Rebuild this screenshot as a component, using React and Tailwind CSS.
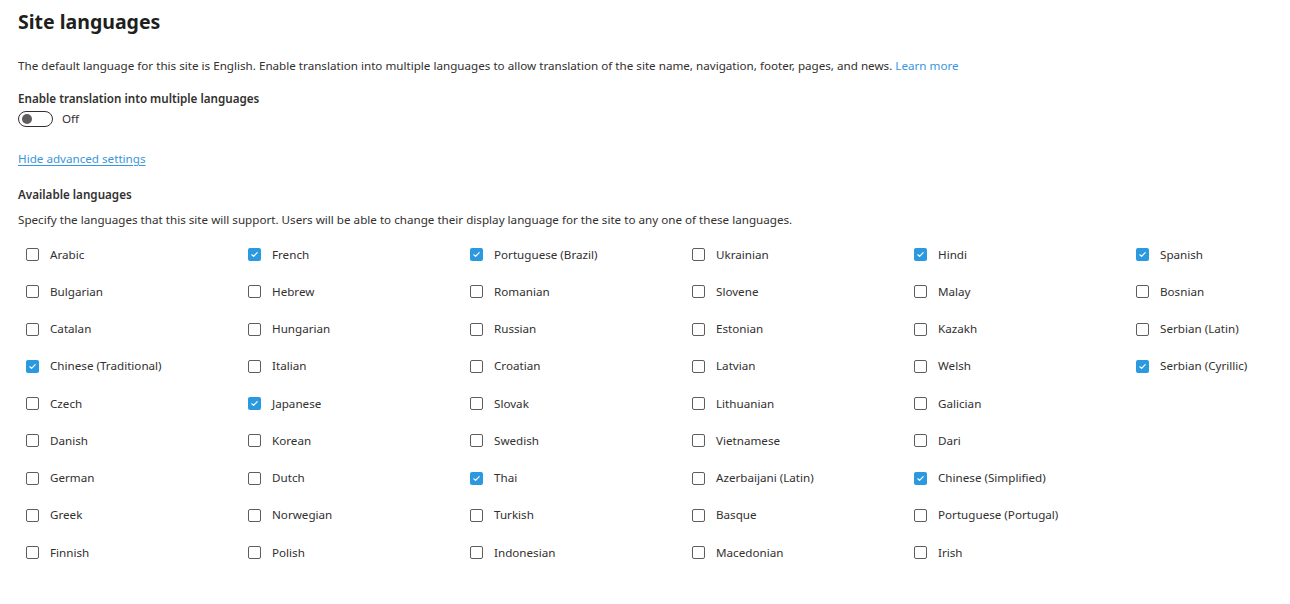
import React from 'react'

const columns = [
  [['Arabic', 0], ['Bulgarian', 0], ['Catalan', 0], ['Chinese (Traditional)', 1], ['Czech', 0], ['Danish', 0], ['German', 0], ['Greek', 0], ['Finnish', 0]],
  [['French', 1], ['Hebrew', 0], ['Hungarian', 0], ['Italian', 0], ['Japanese', 1], ['Korean', 0], ['Dutch', 0], ['Norwegian', 0], ['Polish', 0]],
  [['Portuguese (Brazil)', 1], ['Romanian', 0], ['Russian', 0], ['Croatian', 0], ['Slovak', 0], ['Swedish', 0], ['Thai', 1], ['Turkish', 0], ['Indonesian', 0]],
  [['Ukrainian', 0], ['Slovene', 0], ['Estonian', 0], ['Latvian', 0], ['Lithuanian', 0], ['Vietnamese', 0], ['Azerbaijani (Latin)', 0], ['Basque', 0], ['Macedonian', 0]],
  [['Hindi', 1], ['Malay', 0], ['Kazakh', 0], ['Welsh', 0], ['Galician', 0], ['Dari', 0], ['Chinese (Simplified)', 1], ['Portuguese (Portugal)', 0], ['Irish', 0]],
  [['Spanish', 1], ['Bosnian', 0], ['Serbian (Latin)', 0], ['Serbian (Cyrillic)', 1]],
]

const Checkbox = ({ checked }) =>
  checked ? (
    <span className="flex h-[13px] w-[13px] shrink-0 items-center justify-center rounded-[2px] bg-[#2b99e0]">
      <svg width="9" height="9" viewBox="0 0 9 9" fill="none">
        <path d="M1.8 4.8 L3.6 6.4 L7.2 2.6" stroke="#fff" strokeWidth="1.2" strokeLinecap="round" strokeLinejoin="round" />
      </svg>
    </span>
  ) : (
    <span className="h-[13px] w-[13px] shrink-0 rounded-[2px] border border-[#5f5e5c] bg-white" />
  )

const App = () => {
  return (
    <div className="min-h-[604px] overflow-hidden bg-white px-[18px] pt-[9px] text-[11.65px] text-[#323130]" style={{ fontFamily: '"Noto Sans", sans-serif' }}>
      <h1 className="text-[19.5px] font-bold leading-[26px] text-[#201f1e]">Site languages</h1>

      <p className="mt-[23px] leading-[16px]">
        The default language for this site is English. Enable translation into multiple languages to allow translation of the site name, navigation, footer, pages, and news.{' '}
        <span className="text-[#3a96dd]">Learn more</span>
      </p>

      <div className="mt-[17px] font-semibold leading-[16px]">Enable translation into multiple languages</div>
      <div className="mt-[4px] flex items-center gap-[9px]">
        <span className="flex h-[16px] w-[35px] items-center rounded-full border border-[#323130] px-[3px]">
          <span className="h-[10px] w-[10px] rounded-full bg-[#605e5c]" />
        </span>
        <span className="leading-[16px]">Off</span>
      </div>

      <div className="mt-[24px] leading-[16px] text-[#3a96dd] underline underline-offset-2">Hide advanced settings</div>

      <div className="mt-[20px] font-semibold leading-[16px]">Available languages</div>
      <p className="mt-[9px] leading-[16px]">
        Specify the languages that this site will support. Users will be able to change their display language for the site to any one of these languages.
      </p>

      <div className="mt-[8px] flex pl-[8px]">
        {columns.map((col, i) => (
          <div key={i} className="flex w-[222px] shrink-0 flex-col">
            {col.map(([name, checked]) => (
              <div key={name} className="flex h-[37.25px] items-center gap-[11px]">
                <Checkbox checked={checked} />
                <span className="whitespace-nowrap leading-[16px]">{name}</span>
              </div>
            ))}
          </div>
        ))}
      </div>
    </div>
  )
}

export default App
